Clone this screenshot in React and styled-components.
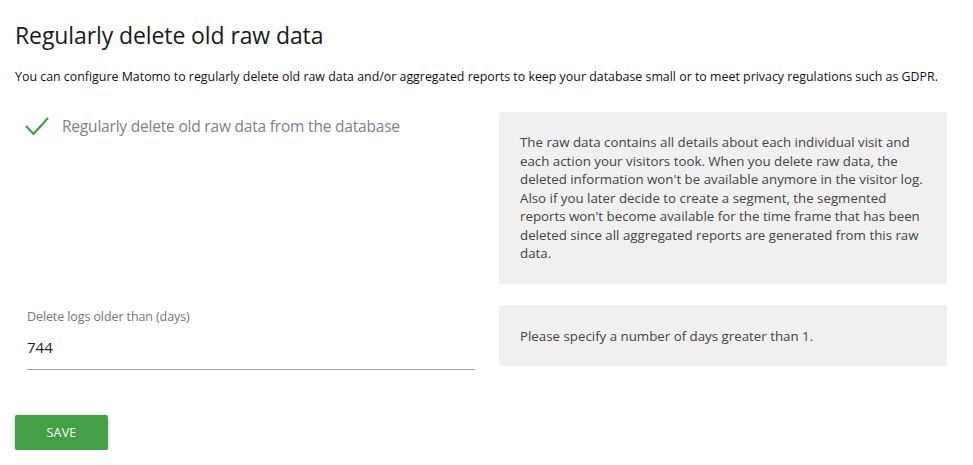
import React from "react";
import styled, { createGlobalStyle } from "styled-components";

const Global = createGlobalStyle`
  html, body { margin: 0; padding: 0; background: #fff; }
  body { font-family: "Open Sans", "Noto Sans", sans-serif; -webkit-font-smoothing: antialiased; }
`;

const Page = styled.div`
  padding: 18px 14px 0 15px;
`;

const Title = styled.h2`
  margin: 0;
  font-size: 23px;
  font-weight: 400;
  line-height: 34px;
  color: #1a1a1a;
  letter-spacing: -0.1px;
`;

const Intro = styled.p`
  margin: 16px 0 0 0;
  font-size: 12.4px;
  line-height: 18px;
  color: #111;
`;

const Row = styled.div`
  display: grid;
  grid-template-columns: 1fr 1fr;
  margin-top: ${(p) => p.$top}px;
`;

const Col = styled.div`
  padding: 0 12px;
`;

const CheckRow = styled.label`
  display: flex;
  align-items: center;
  gap: 13px;
  padding-top: 3px;
  margin-left: -2px;
  font-size: 15.5px;
  line-height: 22px;
  color: #7d8288;
  letter-spacing: -0.2px;
`;

const HelpBox = styled.div`
  background: #f0f0f0;
  border-radius: 2px;
  padding: ${(p) => p.$pad};
  font-size: 13.3px;
  line-height: 18.5px;
  color: #444;
`;

const FieldLabel = styled.div`
  font-size: 12.5px;
  color: #767676;
  margin-top: 4px;
  line-height: 16px;
  letter-spacing: -0.1px;
`;

const ValueInput = styled.input`
  display: block;
  width: 100%;
  box-sizing: border-box;
  border: none;
  border-bottom: 1px solid #9e9e9e;
  outline: none;
  background: transparent;
  font-family: inherit;
  font-size: 15px;
  color: #222;
  padding: 0;
  height: 45px;
  margin-top: 0;
`;

const SaveButton = styled.button`
  margin-top: 45px;
  width: 93px;
  height: 35px;
  border: none;
  border-radius: 2px;
  background: #43a047;
  color: #fff;
  font-family: inherit;
  font-size: 12.5px;
  letter-spacing: 0.2px;
  box-shadow: 0 2px 2px 0 rgba(0,0,0,0.14), 0 3px 1px -2px rgba(0,0,0,0.12), 0 1px 5px 0 rgba(0,0,0,0.2);
  cursor: pointer;
`;

const Check = () => (
  <svg width="24" height="20" viewBox="0 0 24 20">
    <path d="M1 10 L8.5 18 L23 2" fill="none" stroke="#43a047" strokeWidth="2.2" />
  </svg>
);

export default function App() {
  return (
    <>
      <Global />
      <Page>
        <Title>Regularly delete old raw data</Title>
        <Intro>
          You can configure Matomo to regularly delete old raw data and/or aggregated reports to keep your database small or to meet privacy regulations such as GDPR.
        </Intro>
        <Row $top={26}>
          <Col>
            <CheckRow>
              <Check />
              Regularly delete old raw data from the database
            </CheckRow>
          </Col>
          <Col>
            <HelpBox $pad="21px 17px 21px 21px">
              The raw data contains all details about each individual visit and each action your visitors took. When you delete raw data, the deleted information won't be available anymore in the visitor log. Also if you later decide to create a segment, the segmented reports won't become available for the time frame that has been deleted since all aggregated reports are generated from this raw data.
            </HelpBox>
          </Col>
        </Row>
        <Row $top={21}>
          <Col>
            <FieldLabel>Delete logs older than (days)</FieldLabel>
            <ValueInput defaultValue="744" />
          </Col>
          <Col>
            <HelpBox $pad="22px 21px 21px 21px">
              Please specify a number of days greater than 1.
            </HelpBox>
          </Col>
        </Row>
        <SaveButton>SAVE</SaveButton>
      </Page>
    </>
  );
}
